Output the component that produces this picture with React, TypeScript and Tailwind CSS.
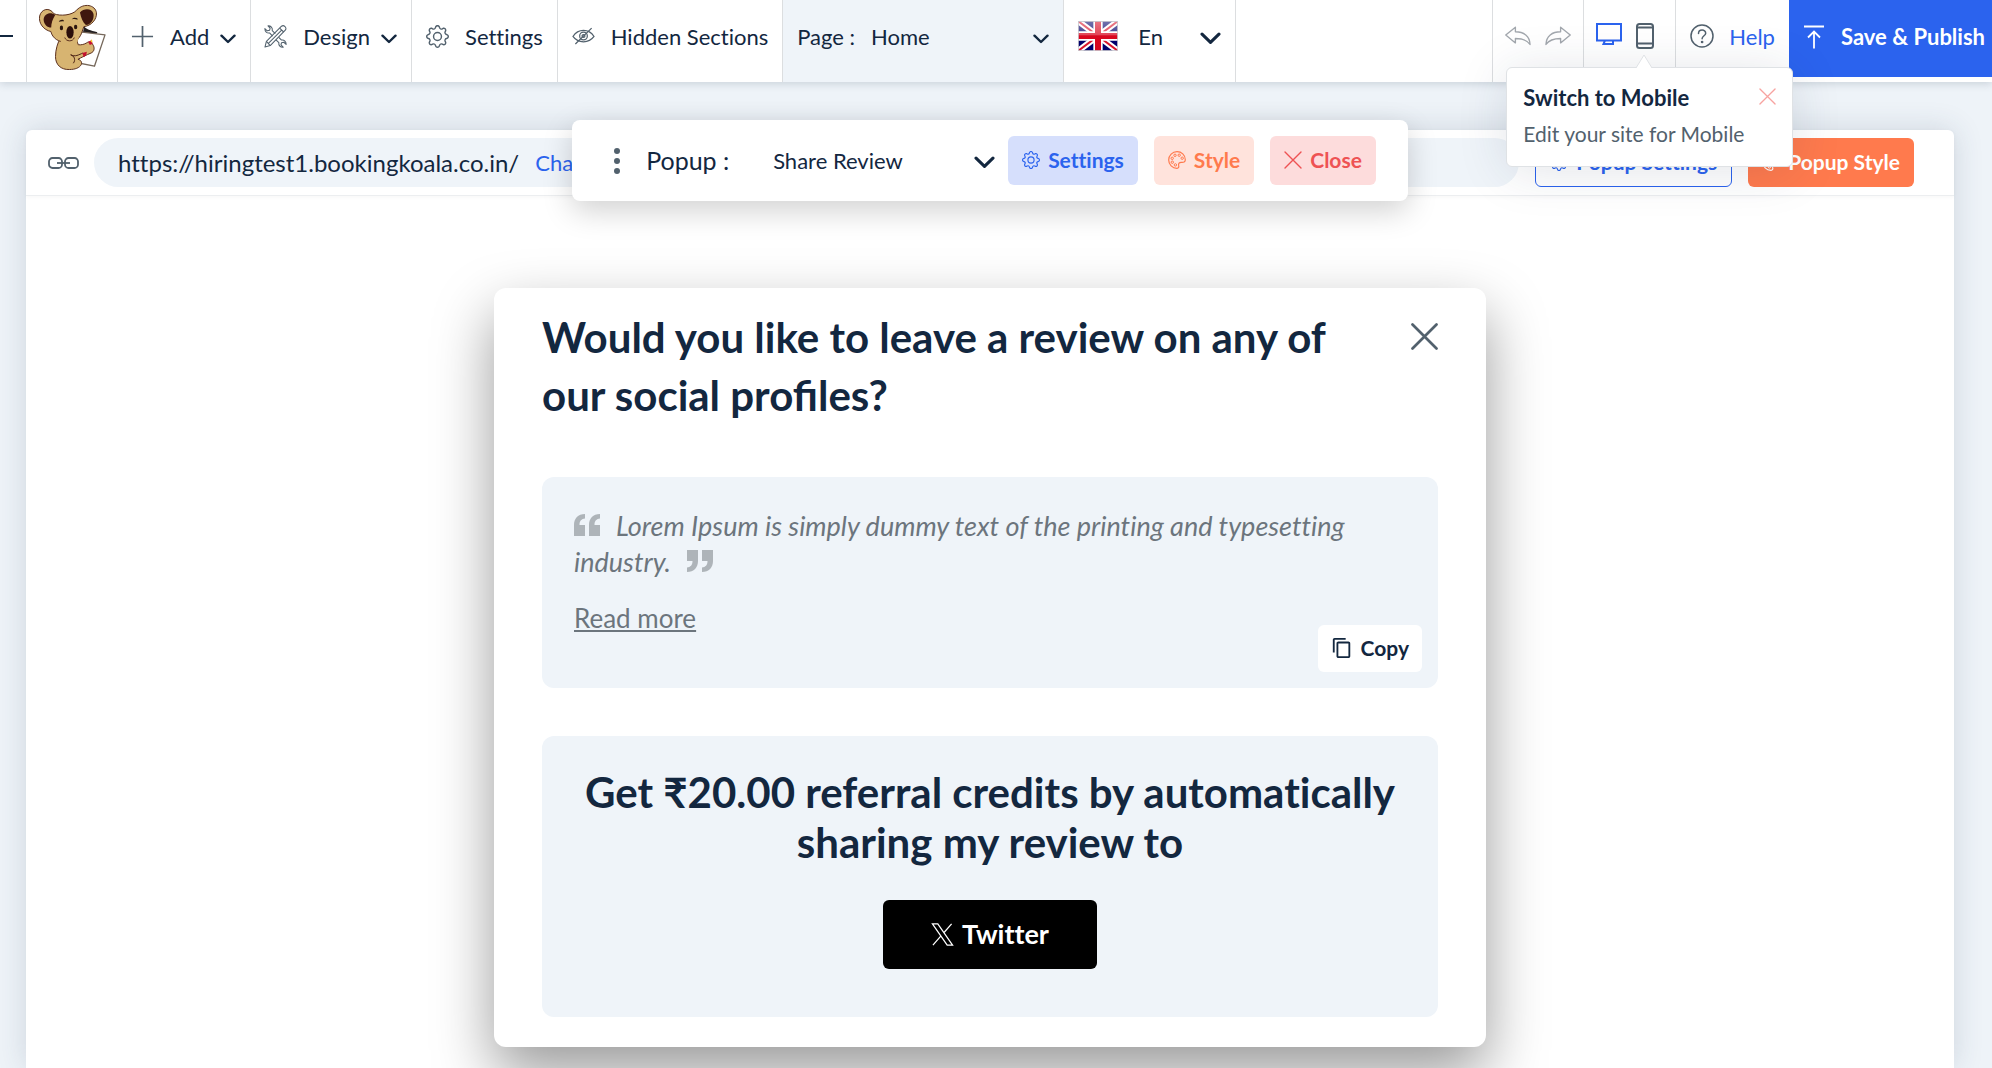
import type { ReactNode } from "react";
import { BsGear } from "react-icons/bs";
import { MdContentCopy } from "react-icons/md";
import { cva } from "class-variance-authority";

const navButton = cva("flex items-center border-l border-[#dcdee0] pr-3.5 pb-2.5", {
  variants: {
    menu: {
      true: "pl-[13px]",
      false: "pl-3.5",
    },
  },
});

function Chevron({ className }: { className: string }) {
  return (
    <svg viewBox="0 0 16 10" fill="none" className={className} aria-hidden="true">
      <path d="M1.5 1.7 8 8l6.5-6.3" stroke="currentColor" strokeWidth="2.4" strokeLinecap="round" strokeLinejoin="round" />
    </svg>
  );
}

function CrossIcon({ className, weight = 1.4 }: { className: string; weight?: number }) {
  return (
    <svg viewBox="0 0 18 18" fill="none" className={className} aria-hidden="true">
      <path d="m1 1 16 16M17 1 1 17" stroke="currentColor" strokeWidth={weight} strokeLinecap="round" />
    </svg>
  );
}

function PaletteIcon({ className }: { className: string }) {
  return (
    <svg viewBox="0 0 18 18" fill="none" className={className} aria-hidden="true">
      <path
        d="M9 .7a8.3 8.3 0 1 0 0 16.6c1.6 0 2.1-1.2 1.7-2.6-.5-2.1.6-3.5 2.6-3.4 2.3.2 4-.3 4-2.6C17.200 4 13.500.7 9 .7Z"
        stroke="currentColor"
        strokeWidth="1.2"
      />
      <g stroke="currentColor" strokeWidth="1">
        <circle cx="7" cy="4.300" r="1.200" />
        <circle cx="11.200" cy="4.200" r="1.200" />
        <circle cx="14.200" cy="7.200" r="1.200" />
        <circle cx="4.200" cy="7.300" r="1.200" />
        <circle cx="4.300" cy="11.200" r="1.200" />
        <circle cx="7.400" cy="13.900" r="1.200" />
      </g>
    </svg>
  );
}

function KoalaLogo() {
  return (
    <svg viewBox="23 10 203 202" className="size-[67px]" aria-label="BookingKoala" role="img">
      <path d="M160 78c6 8 18 12 40 17l-4 7-40-6Z" fill="#231f20" />
      <path d="m148 94 75 9-32 95-75-15Z" fill="#fff" stroke="#75675a" strokeWidth="4" strokeLinejoin="round" />
      <path
        d="M88 112c-8 14-15 35-15 57 0 24 16 40 42 39 17 0 31-5 36-15 3-7-1-14-10-16 10-5 25-13 40-19 9-4 11-14 7-22-4-9-13-15-20-9-8 5-17 7-26 6l-6-18Z"
        fill="#d7b471"
        stroke="#5a2f1d"
        strokeWidth="3"
      />
      <path
        d="M68 39C55 18 30 24 25 46c-4 22 12 42 34 47 5 20 22 33 52 33 20 0 34-10 41-28l7-20c22-2 40-22 38-42-3-23-37-32-60-8-13 16-50 19-69 11Z"
        fill="#d7b471"
        stroke="#5a2f1d"
        strokeWidth="3"
      />
      <path d="M90 108h54l-8 28H88Z" fill="#d7b471" />
      <path d="M72 43C58 32 38 39 37 57c1 14 11 24 23 24 0-13 4-25 12-38Z" fill="#3f170f" />
      <path d="M147 35c12-13 36-13 41 4 3 18-8 33-23 34-9-8-15-23-18-38Z" fill="#3f170f" />
      <path d="M83 63c3-5 8-7 14-5l2 4c-6-1-11 0-16 1Zm39-7c4-5 10-7 17-3l1 4c-6-3-12-3-18-1Z" fill="#2b160f" />
      <ellipse cx="91" cy="82" rx="5" ry="7" fill="#2b160f" />
      <ellipse cx="134" cy="79" rx="5" ry="7" fill="#2b160f" />
      <ellipse cx="117" cy="95" rx="11" ry="19" fill="#2b0f0a" />
      <path d="M101 111c4 13 25 14 29 0" stroke="#5a2f1d" strokeWidth="3" fill="none" />
      <path d="M119 163c13 8 25 0 37-5m-37 6c11 2 16 15 8 25" stroke="#4a2013" strokeWidth="3" fill="none" />
      <path d="m154 158 14-4-2 10-7 7Z" fill="#c4122f" />
      <path d="m172 124 10-5 4 11-9 4Z" fill="#c4122f" />
      <path d="m179 121 4-5 2 8-4 2Z" fill="#f5c52b" />
    </svg>
  );
}

function ToolsIcon() {
  return (
    <svg viewBox="0 0 24 24" fill="none" stroke="currentColor" strokeWidth="1.100" strokeLinejoin="round" className="size-[23px]" aria-hidden="true">
      <path d="m9 11.500-3.200-3.200c-2.600.5-5-1.600-4.900-4.500l2.500 2.300 2.400-.6.600-2.300L4.200.900c2.900-.2 5 2.200 4.400 4.900l3.200 3.200" />
      <path d="m12.500 15.500 3 3c-.5 2.700 1.600 5 4.500 4.700l-2.300-2.400.6-2.300 2.400-.5 2.400 2.300c.2-2.900-2-5.100-4.800-4.600l-2.900-2.900" />
      <path d="M1 23 2.500 17 18.300 1.300c1.200-1 2.600-.6 3.600.4 1 1 1.400 2.500.3 3.600L6.500 21.500Z" />
      <path d="m2.500 17 4 4.500M16.300 3.300l4.300 4M4.600 19.300 18.400 5.400" />
    </svg>
  );
}

function HiddenIcon() {
  return (
    <svg viewBox="0 0 24 18" fill="none" stroke="currentColor" strokeWidth="1.300" className="h-[18px] w-[23px]" aria-hidden="true">
      <path d="M1 9.500c5.500-8.500 16.500-8.500 22 0-5.500 7.500-16.500 7.500-22 0Z" />
      <circle cx="12" cy="9" r="4" />
      <circle cx="12" cy="9" r="1.500" />
      <path d="M20.500.8 3.500 17.300" />
    </svg>
  );
}

function BackArrow({ className }: { className: string }) {
  return (
    <svg viewBox="0 0 27 20" fill="none" stroke="currentColor" strokeWidth="1.400" strokeLinejoin="round" className={className} aria-hidden="true">
      <path d="M.8 9 10.800.9v4.700C19.500 5.600 25.800 10 26 18.800c-3.200-4.600-8-6.200-15.200-6.200v4.600Z" />
    </svg>
  );
}

function UkFlag() {
  return (
    <svg viewBox="0 0 60 44" preserveAspectRatio="none" className="h-[30px] w-10" aria-hidden="true">
      <defs>
        <linearGradient id="gloss" x1="0" y1="0" x2="0" y2="1">
          <stop offset="0" stopColor="#fff" stopOpacity=".45" />
          <stop offset="1" stopColor="#fff" stopOpacity=".25" />
        </linearGradient>
      </defs>
      <rect width="60" height="44" fill="#00006b" />
      <path d="m0 0 60 44M60 0 0 44" stroke="#fff" strokeWidth="9" />
      <path d="m0 0 60 44M60 0 0 44" stroke="#d8152b" strokeWidth="3" />
      <path d="M30 0v44M0 22h60" stroke="#fff" strokeWidth="14" />
      <path d="M30 0v44M0 22h60" stroke="#d8061f" strokeWidth="9" />
      <rect width="60" height="21" fill="url(#gloss)" />
      <rect x=".5" y=".5" width="59" height="43" fill="none" stroke="#c9c9cf" strokeWidth="1.500" />
    </svg>
  );
}

function QuoteMark({ className }: { className: string }) {
  return (
    <svg viewBox="0 0 26 22" className={className} fill="#aeb4b9" aria-hidden="true">
      <path d="M0 22V11C0 4.500 4 0 11 0v4.500C7.500 4.800 5.500 7 5.500 11H11v11ZM15 22V11C15 4.500 19 0 26 0v4.500c-3.500.3-5.500 2.500-5.500 6.500H26v11Z" />
    </svg>
  );
}

function NavButton({ icon, label, menu = false }: { icon: ReactNode; label: string; menu?: boolean }) {
  return (
    <button type="button" className={navButton({ menu })}>
      <span className="text-[#52616d]">{icon}</span>
      <span className="ml-4">{label}</span>
      {menu && <Chevron className="mt-1.5 ml-[11px] h-2.5 w-4" />}
    </button>
  );
}

function Header() {
  return (
    <header className="relative z-20 flex h-[82px] bg-white shadow-[0_2px_8px_rgba(40,60,90,0.18)]">
      <button type="button" aria-label="Menu" className="flex w-[26px] shrink-0 items-center pb-2.5">
        <span className="h-0.5 w-[13px] bg-[#13273f]" />
      </button>
      <a href="#home" className="flex w-[91px] shrink-0 justify-center border-l border-[#dcdee0] pt-1">
        <KoalaLogo />
      </a>
      <NavButton
        label="Add"
        menu
        icon={
          <svg viewBox="0 0 24 24" className="size-[23px]" aria-hidden="true">
            <path d="M12 1v22M1 12h22" stroke="currentColor" strokeWidth="1.800" />
          </svg>
        }
      />
      <NavButton label="Design" menu icon={<ToolsIcon />} />
      <NavButton label="Settings" icon={<BsGear className="size-[23px]" />} />
      <NavButton label="Hidden Sections" icon={<HiddenIcon />} />
      <label className="flex w-[281px] items-center border-l border-[#dcdee0] bg-[#eff4f9] px-3.5 pb-2.5">
        <span className="shrink-0">Page :</span>
        <select className="ml-4 min-w-0 flex-1 appearance-none bg-transparent outline-none">
          <option>Home</option>
        </select>
        <Chevron className="mt-1.5 h-2.5 w-4" />
      </label>
      <label className="flex w-[173px] items-center border-x border-[#dcdee0] px-3.5 pb-2.5">
        <UkFlag />
        <select aria-label="Language" className="ml-5 min-w-0 flex-1 appearance-none bg-transparent outline-none">
          <option>En</option>
        </select>
        <Chevron className="mt-1 h-[13px] w-[21px]" />
      </label>

      <div className="ml-auto flex shrink-0">
        <div className="flex items-center gap-3.5 border-l border-[#dcdee0] px-3 pb-2.5 text-[#a2a7ad]">
          <button type="button" aria-label="Undo">
            <BackArrow className="h-5 w-[26px]" />
          </button>
          <button type="button" aria-label="Redo">
            <BackArrow className="h-5 w-[26px] -scale-x-100" />
          </button>
        </div>
        <div className="relative flex w-[92px] items-center gap-3.5 border-l border-[#dcdee0] px-3 pb-2.5">
          <button type="button" aria-label="Desktop" className="text-[#2b63ee]">
            <svg viewBox="0 0 26 22" fill="none" stroke="currentColor" strokeWidth="2" className="mb-1 h-[22px] w-[26px]" aria-hidden="true">
              <path d="M1 1h24v16.500H1ZM9 17.500h8v3.400H7.500Z" />
            </svg>
          </button>
          <button type="button" aria-label="Mobile" className="text-[#52616d]">
            <svg viewBox="0 0 18 26" fill="none" stroke="currentColor" strokeWidth="2" className="h-[26px] w-[18px]" aria-hidden="true">
              <rect x="1" y="1" width="16" height="24" rx="2.500" />
              <path d="M1 4.500h16M1 20.500h16" />
            </svg>
          </button>
          <MobileTip />
        </div>
        <a href="#help" className="flex items-center gap-[15px] border-l border-[#dcdee0] px-3.5 pb-2.5 text-[#2b63ee]">
          <svg viewBox="0 0 24 24" fill="none" className="size-6 text-[#52616d]" stroke="currentColor" strokeWidth="1.500" aria-hidden="true">
            <circle cx="12" cy="12" r="11" />
            <path d="M8.500 9.500C8.500 4.800 15.700 5 15.700 9.200c0 2.600-3.600 2.600-3.600 5.600" strokeLinecap="round" />
            <circle cx="12.100" cy="18" r=".6" fill="currentColor" />
          </svg>
          Help
        </a>
        <button type="button" className="flex h-[77px] items-center gap-4 bg-[#2b63ee] pr-[7px] pb-1 pl-3.5 font-bold text-white">
          <svg viewBox="0 0 22 24" fill="none" stroke="currentColor" strokeWidth="1.800" className="h-6 w-[22px]" aria-hidden="true">
            <path d="M1 1.500h20M11 23.500V7M5 12.500 11 6.500l6 6" />
          </svg>
          Save &amp; Publish
        </button>
      </div>
    </header>
  );
}

function MobileTip() {
  return (
    <div
      role="tooltip"
      className="absolute top-[67px] -right-[118px] w-[287px] rounded-md border border-[#dfe2e5] bg-white px-4 pt-3 pb-3.5 shadow-[0_4px_50px_rgba(30,50,80,0.13)]"
    >
      <svg viewBox="0 0 16 14" className="absolute -top-[14px] left-[129px] h-3.5 w-4" aria-hidden="true">
        <path d="M0 14 8 1l8 13" fill="#fff" stroke="#dfe2e5" />
      </svg>
      <div className="flex items-start justify-between">
        <h2 className="text-[22px] leading-9 font-bold">Switch to Mobile</h2>
        <button type="button" aria-label="Dismiss" className="mt-2 text-[#f7a3a0]">
          <CrossIcon className="size-[17px]" />
        </button>
      </div>
      <p className="text-[21px] leading-9 text-[#52616d]">Edit your site for Mobile</p>
    </div>
  );
}

function AddressBar() {
  return (
    <div className="flex h-[66px] items-center rounded-t-md border-b border-[#eceef0] pr-10 pl-[22px] shadow-[0_1px_4px_rgba(0,0,0,0.04)]">
      <svg viewBox="0 0 31 12" fill="none" stroke="#52616d" strokeWidth="1.800" className="h-3 w-[31px]" aria-hidden="true">
        <rect x="1" y="1" width="13" height="10" rx="3.500" />
        <rect x="17" y="1" width="13" height="10" rx="3.500" />
        <path d="M9 6h13" />
      </svg>
      <div className="ml-[15px] flex h-[49px] flex-1 items-center gap-4 rounded-full bg-[#eff4f9] px-6">
        <span className="text-[24px]">https://hiringtest1.bookingkoala.co.in/</span>
        <a href="#change" className="text-[22px] text-[#2b63ee]">Change</a>
      </div>
      <button
        type="button"
        className="ml-4 flex h-[49px] items-center gap-2 rounded-md border border-[#2b63ee] px-3.5 pb-0.5 text-[21px] font-bold text-[#2b63ee]"
      >
        <BsGear className="size-[18px]" />
        Popup Settings
      </button>
      <button
        type="button"
        className="ml-4 flex h-[49px] items-center gap-2 rounded-md bg-[#ff7a4d] px-3.5 pb-0.5 text-[21px] font-bold text-white"
      >
        <PaletteIcon className="size-[18px]" />
        Popup Style
      </button>
    </div>
  );
}

function PopupToolbar() {
  return (
    <div className="absolute inset-x-0 -top-[10px] z-10 flex justify-center">
      <div className="flex h-[81px] items-center rounded-lg bg-white pr-8 pl-[42px] shadow-[0_10px_30px_rgba(0,0,0,0.18)]">
        <svg viewBox="0 0 6 26" className="h-[26px] w-1.5" fill="#52616d" aria-hidden="true">
          <circle cx="3" cy="3" r="3" />
          <circle cx="3" cy="13" r="3" />
          <circle cx="3" cy="23" r="3" />
        </svg>
        <label htmlFor="popup" className="ml-[26px] w-[127px] text-[25px]">
          Popup :
        </label>
        <select id="popup" className="w-[201px] appearance-none bg-transparent outline-none">
          <option>Share Review</option>
        </select>
        <Chevron className="mt-1 h-[13px] w-[21px]" />
        <div className="ml-[13px] flex gap-4 text-[21px] font-bold">
          <button type="button" className="flex h-[49px] items-center gap-2 rounded-md bg-[#d6dffc] px-3.5 pb-0.5 text-[#2b63ee]">
            <BsGear className="size-[18px]" />
            Settings
          </button>
          <button type="button" className="flex h-[49px] items-center gap-2 rounded-md bg-[#ffe3dc] px-3.5 pb-0.5 text-[#ff7a4d]">
            <PaletteIcon className="size-[18px]" />
            Style
          </button>
          <button type="button" className="flex h-[49px] items-center gap-2 rounded-md bg-[#fddcdc] px-3.5 pb-0.5 text-[#ee5253]">
            <CrossIcon className="size-[18px]" />
            Close
          </button>
        </div>
      </div>
    </div>
  );
}

function ReviewDialog() {
  return (
    <section
      role="dialog"
      aria-labelledby="review-title"
      className="mx-auto mt-[92px] w-full max-w-[992px] rounded-xl bg-white px-12 pt-5 pb-[30px] shadow-[0_26px_60px_rgba(0,0,0,0.4)]"
    >
      <div className="flex items-start justify-between">
        <h1 id="review-title" className="max-w-[800px] text-[42px] leading-[58px] font-bold [font-variant-ligatures:normal]">
          Would you like to leave a review on any of our social profiles?
        </h1>
        <button type="button" aria-label="Close" className="mt-[15px] text-[#52616d]">
          <CrossIcon className="size-[27px]" weight={1.8} />
        </button>
      </div>

      <div className="relative mt-[53px] h-[211px] rounded-xl bg-[#eff4f9] px-8 pt-[31px] text-[26px] leading-9 text-[#6c757d]">
        <p className="pr-12 text-[27px] leading-9 italic">
          <QuoteMark className="mr-4 inline-block h-[22px] w-[26px] align-baseline" />
          Lorem Ipsum is simply dummy text of the printing and typesetting industry.
          <QuoteMark className="ml-4 inline-block h-[22px] w-[26px] rotate-180 align-baseline" />
        </p>
        <a href="#more" className="mt-5 inline-block underline">
          Read more
        </a>
        <button
          type="button"
          className="absolute right-4 bottom-4 flex h-[47px] items-center gap-2 rounded-md bg-white px-[13px] pb-0.5 text-[21px] font-bold text-[#13273f]"
        >
          <MdContentCopy className="size-[22px]" />
          Copy
        </button>
      </div>

      <div className="mt-12 flex flex-col items-center rounded-xl bg-[#eff4f9] px-8 pt-[31px] pb-12">
        <h2 className="text-center text-[42px] leading-[50px] font-bold">
          Get ₹20.00 referral credits by automatically sharing my review to
        </h2>
        <button type="button" className="mt-[33px] flex h-[69px] items-center gap-2 rounded-md bg-black px-12 text-[27px] font-bold text-white">
          <svg viewBox="0 0 24 24" fill="none" stroke="currentColor" strokeWidth="1.300" className="size-[23px]" aria-hidden="true">
            <path d="M1.500 1h5.600l15.400 22h-5.600ZM21.500 1 13.400 10.200M10.400 13.500 2 23" />
          </svg>
          Twitter
        </button>
      </div>
    </section>
  );
}

export default function App() {
  return (
    <div className="flex min-h-screen flex-col overflow-hidden bg-[#eef3f8] font-['Lato',sans-serif] text-[22px] text-[#13273f] [font-variant-ligatures:none]">
      <Header />
      <main className="relative mt-12 mr-[38px] ml-[26px] flex-1 rounded-t-md bg-white shadow-[0_0_30px_rgba(40,60,90,0.16)]">
        <AddressBar />
        <PopupToolbar />
        <ReviewDialog />
      </main>
    </div>
  );
}
